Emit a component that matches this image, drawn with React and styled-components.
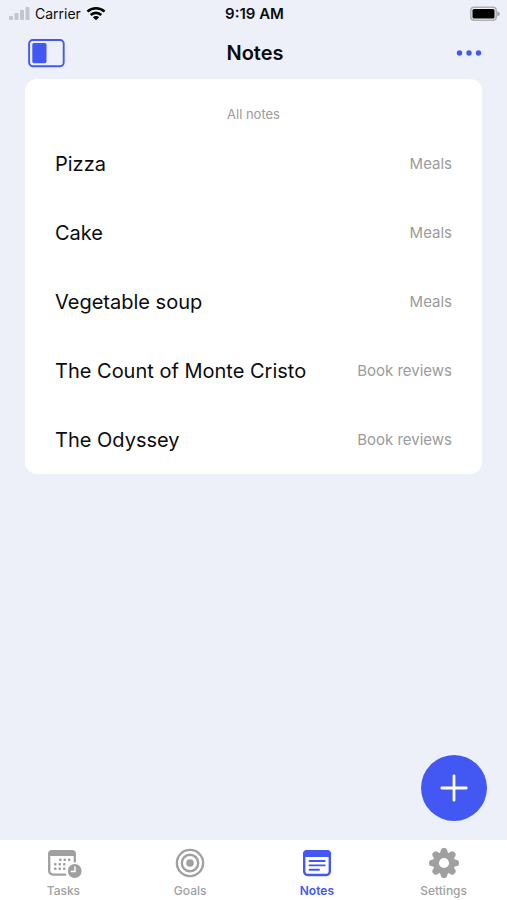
import React from "react";
import styled, { createGlobalStyle } from "styled-components";

const BLUE = "#4358f2";
const GREY = "#9b9b9b";

const GlobalStyle = createGlobalStyle`
  * { box-sizing: border-box; }
  body {
    margin: 0;
    background: #edf0f9;
    color: #0b0b0d;
    font-family: Inter, "Liberation Sans", sans-serif;
  }
  button { font: inherit; border: 0; padding: 0; background: none; cursor: pointer; }
  svg { display: block; }
`;

const Screen = styled.div`
  min-height: 100vh;
  display: flex;
  flex-direction: column;
`;

const StatusBar = styled.div`
  display: grid;
  grid-template-columns: 1fr auto 1fr;
  align-items: center;
  height: 27px;
  padding: 0 6px 0 8px;
  font-size: 14px;
  line-height: 20px;
`;

const StatusGroup = styled.div`
  display: flex;
  align-items: center;
  gap: 5px;
  justify-content: ${({ $end }) => ($end ? "flex-end" : "flex-start")};
`;

const Clock = styled.time`
  font-size: 15px;
  font-weight: 600;
`;

const Header = styled.header`
  display: grid;
  grid-template-columns: 1fr auto 1fr;
  align-items: center;
  height: 52px;
  padding: 0 25px 0 28px;
`;

const Title = styled.h1`
  margin: 0;
  font-size: 20px;
  line-height: 28px;
  font-weight: 600;
`;

const IconButton = styled.button`
  justify-self: ${({ $end }) => ($end ? "end" : "start")};
  color: ${BLUE};
`;

const Main = styled.main`
  flex: 1;
  display: flex;
  flex-direction: column;
`;

const Card = styled.section`
  margin: 0 25px;
  padding: 25px 30px 20px;
  border-radius: 12px;
  background: #fff;
`;

const Caption = styled.h2`
  margin: 0 0 26px;
  text-align: center;
  color: ${GREY};
  font-size: 13px;
  line-height: 20px;
  font-weight: 400;
`;

const NoteList = styled.ul`
  display: flex;
  flex-direction: column;
  gap: 41px;
  margin: 0;
  padding: 0;
  list-style: none;
`;

const NoteRow = styled.button`
  display: flex;
  width: 100%;
  align-items: center;
  justify-content: space-between;
  gap: 16px;
  text-align: left;
`;

const NoteName = styled.span`
  font-size: 20px;
  line-height: 28px;
  color: #0b0b0d;
`;

const NoteGroup = styled.span`
  font-size: 15px;
  line-height: 20px;
  color: ${GREY};
  white-space: nowrap;
`;

const AddButton = styled.button`
  display: grid;
  place-items: center;
  align-self: flex-end;
  width: 66px;
  height: 66px;
  margin: auto 20px 19px 0;
  border-radius: 50%;
  && { background: ${BLUE}; }
  color: #fff;
`;

const TabBar = styled.nav`
  display: grid;
  grid-template-columns: repeat(4, 1fr);
  height: 60px;
  padding-top: 7px;
  background: #fff;
`;

const Tab = styled.button`
  display: flex;
  flex-direction: column;
  align-items: center;
  gap: 4px;
  color: ${({ $active }) => ($active ? BLUE : "#a0a0a0")};
`;

const TabLabel = styled.span`
  font-size: 12px;
  line-height: 16px;
  font-weight: ${({ $active }) => ($active ? 600 : 500)};
`;

const SignalIcon = () => (
  <svg width="22" height="14" viewBox="0 0 22 14" fill="#c3c5cc" aria-hidden="true">
    <rect x="1" y="9" width="4" height="4" rx="1" />
    <rect x="6.5" y="6" width="4" height="7" rx="1" />
    <rect x="12" y="3" width="4" height="10" rx="1" />
    <rect x="17.5" y="0" width="4" height="13" rx="1" />
  </svg>
);

const WifiIcon = () => (
  <svg width="20" height="15" viewBox="0 0 20 15" aria-hidden="true">
    <g fill="none" stroke="#000" strokeWidth="2.6">
      <path d="M1.5 5.6a12.3 12.3 0 0 1 17 0" />
      <path d="M4.7 9a7.6 7.6 0 0 1 10.6 0" />
    </g>
    <path d="M10 14.3 6.9 11.2a4.4 4.4 0 0 1 6.2 0z" />
  </svg>
);

const BatteryIcon = () => (
  <svg width="32" height="16" viewBox="0 0 32 16" role="img" aria-label="Battery full">
    <rect x="1.8" y="1.3" width="25.4" height="13" rx="3.2" fill="#edf0f9" stroke="#aeb0b5" strokeWidth="1.5" />
    <rect x="3.5" y="3" width="22" height="9.6" rx="1.5" fill="#000" />
    <path d="M28.3 5.2q2.6 1 2.6 2.6t-2.6 2.6z" fill="#9fa1a6" />
  </svg>
);

const SidebarIcon = () => (
  <svg width="37" height="29" viewBox="0 0 37 29" aria-hidden="true">
    <rect x="1.1" y="1" width="34.6" height="26.2" rx="3.6" fill="none" stroke="currentColor" strokeWidth="1.9" />
    <rect x="4.3" y="4" width="14.2" height="20.2" rx="1.6" fill="currentColor" />
  </svg>
);

const MoreIcon = () => (
  <svg width="26" height="8" viewBox="0 0 26 8" fill="currentColor" aria-hidden="true">
    <circle cx="3.5" cy="4" r="2.7" />
    <circle cx="13" cy="4" r="2.7" />
    <circle cx="22.5" cy="4" r="2.7" />
  </svg>
);

const PlusIcon = () => (
  <svg width="28" height="28" viewBox="0 0 28 28" aria-hidden="true">
    <path d="M14 1.8v24.4M1.8 14h24.4" stroke="currentColor" strokeWidth="2.8" strokeLinecap="round" />
  </svg>
);

const dots = [
  [14, 11], [18.5, 11], [23, 11],
  [9, 15.5], [13.5, 15.5], [18, 15.5],
  [9, 20], [13.5, 20], [18, 20],
];

const TasksIcon = () => (
  <svg width="38" height="32" viewBox="-2 0 38 32" fill="currentColor" aria-hidden="true">
    <path d="M6 3h20a4 4 0 0 1 4 4v2H2V7a4 4 0 0 1 4-4z" />
    <path d="M3.2 7v17a3.6 3.6 0 0 0 3.6 3.6h13.4M28.8 7v8.6" fill="none" stroke="currentColor" strokeWidth="2.3" />
    {dots.map(([x, y]) => (
      <rect key={`${x}-${y}`} x={x - 1} y={y + 0.6} width="2.5" height="2.5" rx=".8" />
    ))}
    <circle cx="28.7" cy="24" r="8.3" fill="#fff" />
    <circle cx="28.7" cy="24" r="6.9" />
    <path d="M29 19.5v4.9h-4.2" fill="none" stroke="#fff" strokeWidth="1.5" />
  </svg>
);

const GoalsIcon = () => (
  <svg width="32" height="32" viewBox="0 0 32 32" fill="none" stroke="currentColor" aria-hidden="true">
    <circle cx="16" cy="16" r="13.1" strokeWidth="2.4" />
    <circle cx="16" cy="16" r="8.2" strokeWidth="2.4" />
    <circle cx="16" cy="16" r="3.8" fill="currentColor" stroke="none" />
  </svg>
);

const NotesIcon = () => (
  <svg width="32" height="32" viewBox="0 0 32 32" fill="none" stroke="currentColor" aria-hidden="true">
    <rect x="3.2" y="4.2" width="25.6" height="23.8" rx="3.4" strokeWidth="2.4" />
    <path d="M6 3h20a4 4 0 0 1 4 4v3H2V7a4 4 0 0 1 4-4z" fill="currentColor" stroke="none" />
    <path d="M8.5 14h15.2M8.5 18.4h15.2M8.5 22.8h9.5" strokeWidth="1.9" strokeLinecap="round" />
  </svg>
);

const SettingsIcon = () => (
  <svg width="32" height="32" viewBox="0 0 32 32" aria-hidden="true">
    <circle cx="16" cy="16" r="8.1" fill="none" stroke="currentColor" strokeWidth="6" />
    {[0, 45, 90, 135, 180, 225, 270, 315].map((angle) => (
      <path
        key={angle}
        d="M12 6.5 12.9 3Q13.4 1.1 15.1 1.1h1.8q1.7 0 2.2 1.9L20 6.5z"
        fill="currentColor"
        transform={`rotate(${angle} 16 16)`}
      />
    ))}
  </svg>
);

const notes = [
  { name: "Pizza", group: "Meals" },
  { name: "Cake", group: "Meals" },
  { name: "Vegetable soup", group: "Meals" },
  { name: "The Count of Monte Cristo", group: "Book reviews" },
  { name: "The Odyssey", group: "Book reviews" },
];

const tabs = [
  { label: "Tasks", Icon: TasksIcon },
  { label: "Goals", Icon: GoalsIcon },
  { label: "Notes", Icon: NotesIcon, active: true },
  { label: "Settings", Icon: SettingsIcon },
];

export default function App() {
  return (
    <Screen>
      <GlobalStyle />
      <StatusBar>
        <StatusGroup>
          <SignalIcon />
          <span>Carrier</span>
          <WifiIcon />
        </StatusGroup>
        <Clock>9:19 AM</Clock>
        <StatusGroup $end>
          <BatteryIcon />
        </StatusGroup>
      </StatusBar>
      <Header>
        <IconButton aria-label="Toggle sidebar"><SidebarIcon /></IconButton>
        <Title>Notes</Title>
        <IconButton $end aria-label="More options"><MoreIcon /></IconButton>
      </Header>
      <Main>
        <Card>
          <Caption>All notes</Caption>
          <NoteList>
            {notes.map((note) => (
              <li key={note.name}>
                <NoteRow>
                  <NoteName>{note.name}</NoteName>
                  <NoteGroup>{note.group}</NoteGroup>
                </NoteRow>
              </li>
            ))}
          </NoteList>
        </Card>
        <AddButton aria-label="Add note"><PlusIcon /></AddButton>
      </Main>
      <TabBar>
        {tabs.map(({ label, Icon, active }) => (
          <Tab key={label} $active={active} aria-current={active ? "page" : undefined}>
            <Icon />
            <TabLabel $active={active}>{label}</TabLabel>
          </Tab>
        ))}
      </TabBar>
    </Screen>
  );
}
